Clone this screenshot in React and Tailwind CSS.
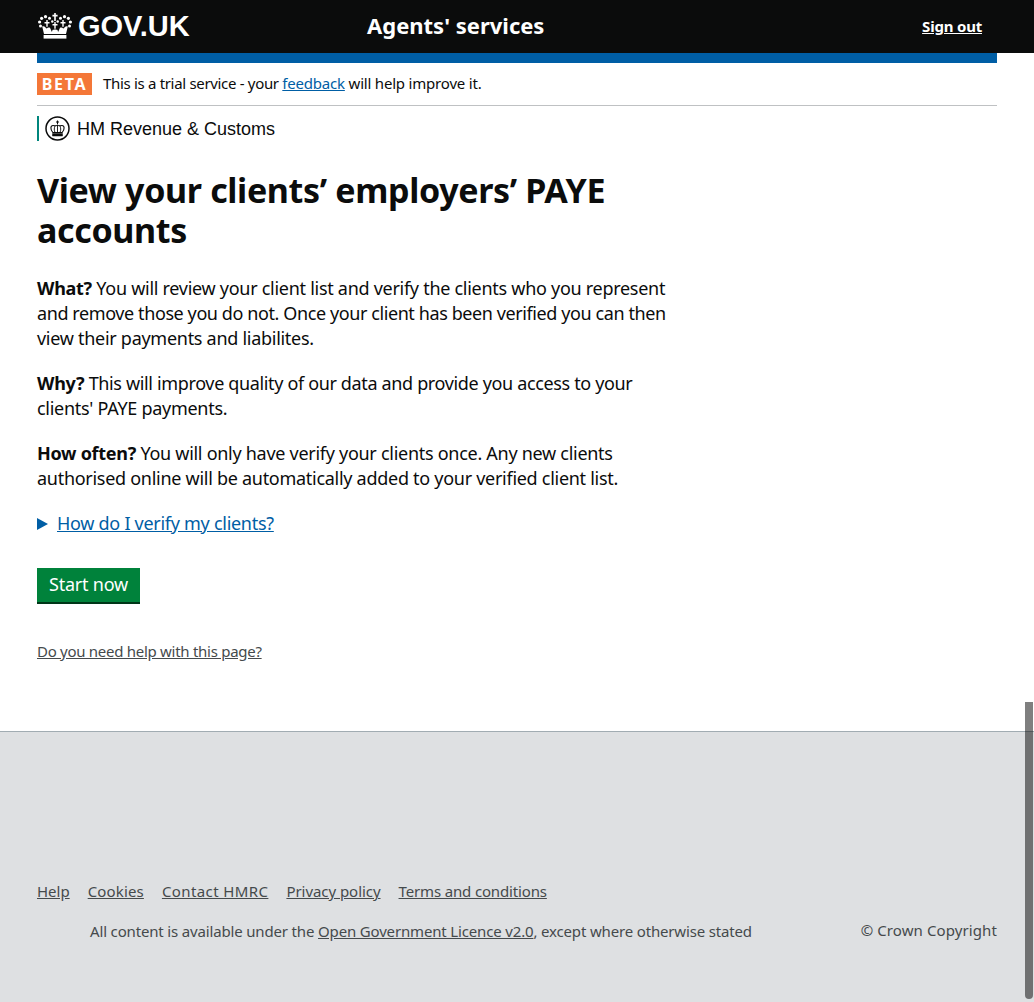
const font = { fontFamily: '"Noto Sans", sans-serif' };

function Crown({ className }) {
  return (
    <svg viewBox="0 0 34 26" className={className} fill="#fff">
      <path d="M16.200 0h1.600v1.800h1.800v1.600h-1.800V8h-1.600V3.400h-1.800V1.800h1.800z" />
      <circle cx="11.500" cy="5.200" r="1.500" />
      <circle cx="22.500" cy="5.200" r="1.500" />
      <circle cx="7.500" cy="3.700" r="1.600" />
      <circle cx="26.500" cy="3.700" r="1.600" />
      <circle cx="3.600" cy="5.300" r="1.600" />
      <circle cx="30.400" cy="5.300" r="1.600" />
      <circle cx="1.600" cy="9" r="1.600" />
      <circle cx="32.400" cy="9" r="1.600" />
      <circle cx="2.500" cy="13" r="1.500" />
      <circle cx="31.500" cy="13" r="1.500" />
      <circle cx="14.300" cy="8.500" r="1.200" />
      <circle cx="19.700" cy="8.500" r="1.200" />
      <path d="M8.300 7h1.400v2h1.800v1.400H9.700v3.300H8.300v-3.300H6.500V9h1.800zM16.300 9h1.400v2h1.800v1.400h-1.800v3.300h-1.400v-3.300h-1.800V11h1.800zM24.300 7h1.400v2h1.800v1.400h-1.800v3.300h-1.400v-3.300h-1.800V9h1.800z" />
      <path d="M4.200 13.500c1.700-.7 3 .2 3.600 1.400l1 .5c.6-.9 2-1.400 3.200-.6l1.900 4.200.6-2c.6-.8 4.400-.8 5 0l.6 2 1.900-4.200c1.200-.8 2.600-.3 3.200.6l1-.5c.6-1.200 1.900-2.100 3.600-1.400L28 21H6z" />
      <path d="M5.600 22h22.800v3.600H5.600z" />
    </svg>
  );
}

function HmrcCrest() {
  return (
    <svg viewBox="0 0 25 25" className="w-[25px] h-[25px] shrink-0" fill="none" stroke="#0b0c0c">
      <circle cx="12.500" cy="12.500" r="11.500" strokeWidth="1.500" />
      <path d="M12.500 4.500v3.500M11 6h3" strokeWidth="1" />
      <path d="M7.800 16.500C5 13 5.500 9.500 8 9.500c2 0 3.200 1 4.500-.5 1.300 1.500 2.500.5 4.500.5 2.500 0 3 3.500.2 7z" strokeWidth="1.100" />
      <path d="M10 16.500c-1-2.500-1-4.500.2-7M15 16.500c1-2.500 1-4.500-.2-7M12.500 9v7.500" strokeWidth="0.900" />
      <path d="M7.500 17.500h10V20h-10z" fill="#0b0c0c" strokeWidth="0.500" />
    </svg>
  );
}

function FooterLink({ children, className = "" }) {
  return <a className={`underline text-[#454a4c] text-[15px] leading-5 ${className}`}>{children}</a>;
}

export default function App() {
  return (
    <div style={font} className="relative h-[1002px] overflow-hidden bg-white text-[#0b0c0c] flex flex-col">
      <header className="bg-[#0b0c0c] h-[53px] px-[37px] flex items-center shrink-0">
        <div className="w-[330px] flex items-center gap-[6px]">
          <Crown className="w-[34px] h-[26px] ml-[1px] -mt-[2px]" />
          <span className="text-white font-bold text-[29px] leading-none" style={{ fontFamily: '"Liberation Sans", sans-serif' }}>GOV.UK</span>
        </div>
        <div className="text-white font-bold text-[22px] leading-none -mt-[4px]">Agents' services</div>
        <a className="ml-auto mr-[15px] -mt-[1px] text-white font-bold text-[15px] tracking-[-0.2px] underline">Sign out</a>
      </header>
      <div className="mx-[37px] h-[10px] bg-[#005ea5] shrink-0" />
      <div className="mx-[37px] h-[43px] border-b border-[#bfc1c3] flex items-center gap-[11px] shrink-0">
        <span className="bg-[#f47738] text-white font-bold text-[16px] leading-none tracking-[1.700px] w-[55px] h-[22px] flex items-center justify-center">BETA</span>
        <span className="text-[15px] leading-5 tracking-[-0.2px] -mt-[2px]"><span className="tracking-[-0.32px]">This is a trial service - your </span><a className="underline text-[#005ea5]">feedback</a> will help improve it.</span>
      </div>
      <div className="mx-[37px] mt-[10px] h-[25px] border-l-2 border-[#00857c] pl-[6px] flex items-center gap-[7px] shrink-0">
        <HmrcCrest />
        <span className="text-[18px] text-[#0b0c0c] mt-[1px]" style={{ fontFamily: '"Liberation Sans", sans-serif' }}>HM Revenue &amp; Customs</span>
      </div>
      <main className="pl-[37px] pt-[29px] w-[677px] flex-1">
        <h1 className="font-bold text-[34px] tracking-[-0.35px] leading-[40px] mb-[26px]">View your clients’ employers’ PAYE accounts</h1>
        <div className="text-[18px] tracking-[-0.28px] leading-[25px]">
          <p className="mb-5"><b>What?</b> You will review your client list and verify the clients who you represent <span className="tracking-[-0.405px]">and remove those you do not. Once your client has been verified you can then</span> view their payments and liabilites.</p>
          <p className="mb-5"><b>Why?</b> <span className="tracking-[-0.35px]">This will improve quality of our data and provide you access to your</span> clients' PAYE payments.</p>
          <p className="mb-5"><b>How often?</b> You will only have verify your clients once. Any new clients authorised online will be automatically added to your verified client list.</p>
          <div className="flex items-center gap-[9px] h-[25px] text-[#005ea5]">
            <svg viewBox="0 0 11 12" className="w-[11px] h-[12px]"><path d="M0 0l11 6-11 6z" fill="#005ea5" /></svg>
            <a className="underline">How do I verify my clients?</a>
          </div>
        </div>
        <button className="mt-[32px] block bg-[#00823b] text-white text-[18px] tracking-[-0.2px] leading-[25px] w-[103px] h-[36px] border-b-2 border-[#003618]"><span className="block -mt-[2px]">Start now</span></button>
        <a className="mt-[38px] block text-[15px] leading-5 tracking-[-0.28px] underline text-[#454a4c] -translate-y-[1px]">Do you need help with this page?</a>
      </main>
      <footer className="h-[271px] shrink-0 bg-[#dee0e2] border-t border-[#a1acb2] px-[37px] pt-[149px]">
        <div className="flex gap-[18px]">
          <FooterLink>Help</FooterLink>
          <FooterLink className="tracking-[0.15px]">Cookies</FooterLink>
          <FooterLink className="tracking-[0.4px]">Contact HMRC</FooterLink>
          <FooterLink className="tracking-[-0.05px]">Privacy policy</FooterLink>
          <FooterLink className="tracking-[-0.15px]">Terms and conditions</FooterLink>
        </div>
        <div className="mt-5 flex items-center justify-between text-[15px] leading-5 text-[#454a4c]">
          <span className="ml-[53px] tracking-[-0.16px]">All content is available under the <a className="underline">Open Government Licence v2.0</a>, except where otherwise stated</span>
          <span className="-mt-[2px] tracking-[0.1px]">© Crown Copyright</span>
        </div>
      </footer>
      <div className="absolute top-[702px] right-[1px] w-[8px] h-[297px] bg-black/50 rounded-b-[4px]" />
    </div>
  );
}
